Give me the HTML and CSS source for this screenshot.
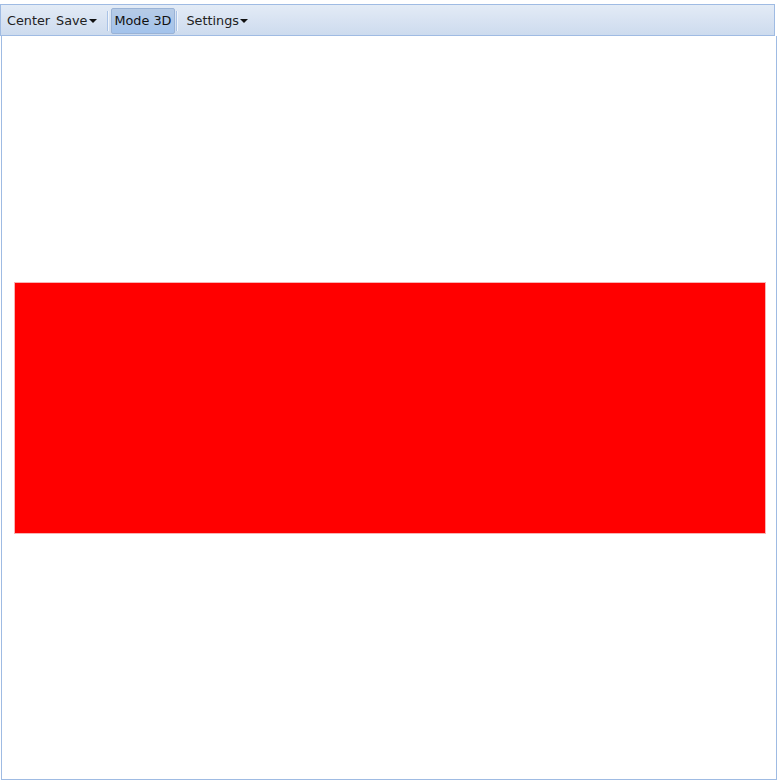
FILE: index.html
```html
<!DOCTYPE html>
<html>
<head>
<meta charset="utf-8">
<link rel="stylesheet" href="styles.css">
</head>
<body>
<div class="app">
  <div class="toolbar">
    <span class="btn">Center</span>
    <span class="btn menu save">Save<i class="caret"></i></span>
    <span class="sep"></span>
    <span class="btn pressed">Mode 3D</span>
    <span class="sep"></span>
    <span class="btn menu settings">Settings<i class="caret"></i></span>
  </div>
  <div class="canvas">
    <div class="shape"></div>
  </div>
</div>
</body>
</html>
```
FILE: styles.css
```css
html, body { margin: 0; padding: 0; background: #fff; }
body { font-family: "DejaVu Sans", "Liberation Sans", sans-serif; font-size: 12.8px; color: #222; }
.app { padding: 4px 3px 2px 0; display: flex; flex-direction: column; height: 776px; box-sizing: content-box; }
.toolbar {
  height: 32px; box-sizing: border-box;
  margin-right: 2px;
  border: 1px solid #9fbbe3;
  background: linear-gradient(#e3ebf6, #cddbee);
  display: flex; align-items: center; padding: 1px 3px 0 3px;
}
.btn { padding: 0 3px; height: 24px; display: flex; align-items: center; white-space: nowrap; }
.menu { padding-right: 2px; }
.save { margin-left: 0; margin-right: 7px; }
.settings { padding-left: 6px; }
.caret { display: inline-block; width: 0; height: 0; border-left: 4px solid transparent; border-right: 4px solid transparent; border-top: 4px solid #111; margin-left: 1px; margin-top: 1px; }
.sep { width: 1px; height: 20px; background: #a9c2e6; box-shadow: 1px 0 0 #f0f5fb; margin: 0 3px 0 1px; }
.pressed {
  border: 1px solid #9ab3d6; border-radius: 2px;
  background: linear-gradient(#b6cbe6, #a3c3ec);
  color: #111; padding: 0 3px 0 3px; height: 26px; box-sizing: border-box;
}
.canvas {
  flex: 1; margin-left: 1px;
  border: 1px solid #9fbbe3; border-top: none;
  display: flex; align-items: center;
}
.shape {
  margin-left: 13px; width: 750px; height: 250px; background: #f00;
  box-shadow: 0 0 0 1px #f9b3b3;
  margin-top: 0;
}
```
